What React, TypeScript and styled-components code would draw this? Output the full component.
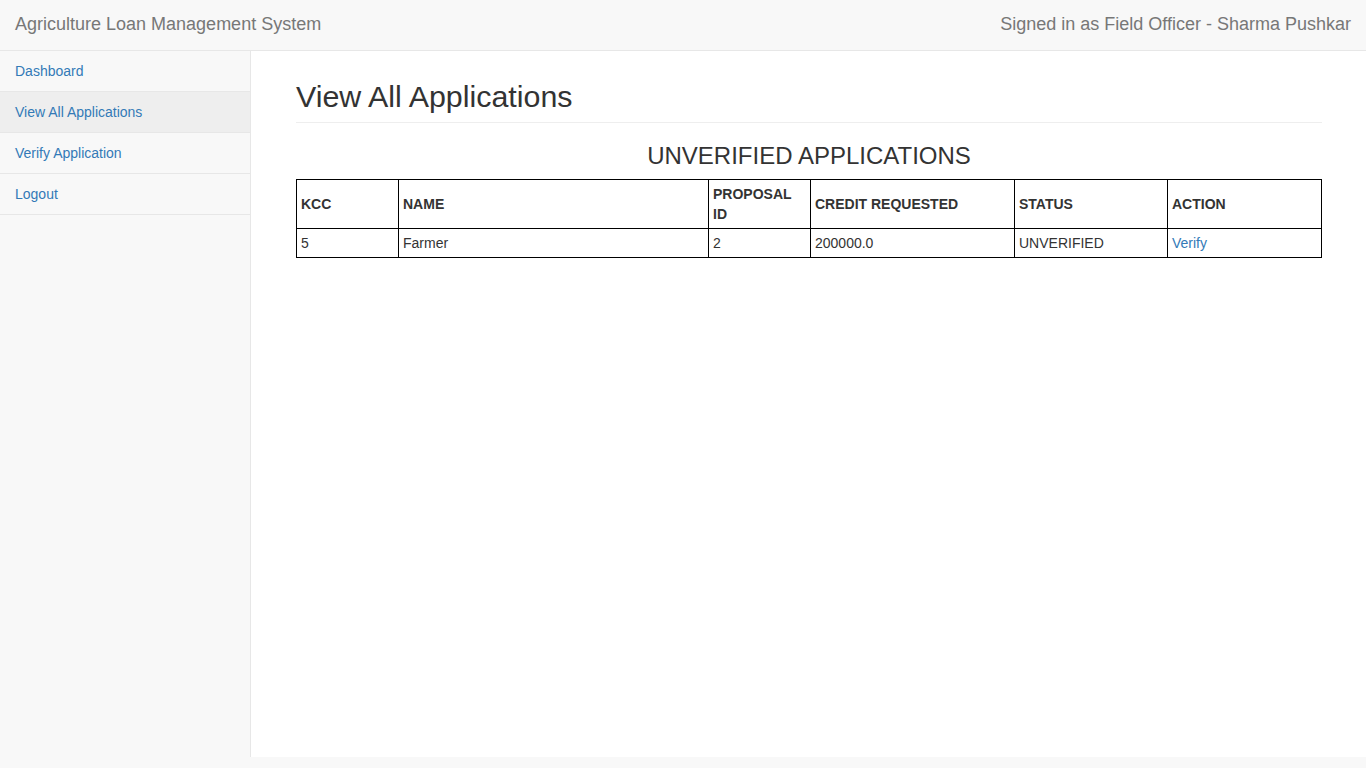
import React from "react";
import styled, { createGlobalStyle } from "styled-components";

const Global = createGlobalStyle`
  html, body { margin: 0; padding: 0; }
  body {
    background: #f8f8f8;
    font-family: "Liberation Sans", Arial, sans-serif;
    font-size: 14px;
    line-height: 1.42857;
    color: #333;
  }
  * { box-sizing: border-box; }
`;

const Navbar = styled.nav`
  height: 51px;
  background: #f8f8f8;
  border-bottom: 1px solid #e7e7e7;
  display: flex;
  justify-content: space-between;
  align-items: center;
  padding: 0 15px;
`;

const NavText = styled.span`
  font-size: 18px;
  line-height: 20px;
  color: #777;
  padding-bottom: 2px;
`;

const Body = styled.div`
  display: flex;
  align-items: flex-start;
`;

const Sidebar = styled.ul`
  width: 250px;
  flex: 0 0 250px;
  list-style: none;
  margin: 0;
  padding: 0;
`;

const SideItem = styled.li<{ $active?: boolean }>`
  border-bottom: 1px solid #e7e7e7;
  background: ${(p) => (p.$active ? "#eeeeee" : "transparent")};
`;

const SideLink = styled.a`
  display: block;
  padding: 10px 15px;
  line-height: 20px;
  font-size: 14px;
  color: #337ab7;
  text-decoration: none;
`;

const PageWrapper = styled.main`
  flex: 1;
  min-height: 706px;
  background: #fff;
  border-left: 1px solid #e7e7e7;
  padding: 0 46px 0 45px;
`;

const PageHeader = styled.h1`
  font-size: 30.4px;
  font-weight: 500;
  line-height: 33px;
  color: #333;
  margin: 29px 0 0;
  padding-bottom: 9px;
  border-bottom: 1px solid #eee;
`;

const SectionTitle = styled.h3`
  font-size: 24px;
  font-weight: 500;
  line-height: 1.1;
  text-align: center;
  color: #333;
  margin: 20px 0 10px;
`;

const Table = styled.table`
  width: 100%;
  border-collapse: collapse;
  table-layout: fixed;
  border: 1px solid #000;
`;

const Th = styled.th`
  border: 1px solid #000;
  padding: 4px;
  text-align: left;
  font-weight: bold;
  font-size: 14px;
  line-height: 20px;
  color: #333;
  vertical-align: middle;
`;

const Td = styled.td`
  border: 1px solid #000;
  padding: 4px;
  font-size: 14px;
  line-height: 20px;
  color: #333;
`;

const Link = styled.a`
  color: #337ab7;
  text-decoration: none;
`;

const cols = [102, 310, 102, 204, 153, 154];

export default function App() {
  return (
    <>
      <Global />
      <Navbar>
        <NavText>Agriculture Loan Management System</NavText>
        <NavText>Signed in as Field Officer - Sharma Pushkar</NavText>
      </Navbar>
      <Body>
        <Sidebar>
          <SideItem><SideLink href="#">Dashboard</SideLink></SideItem>
          <SideItem $active><SideLink href="#">View All Applications</SideLink></SideItem>
          <SideItem><SideLink href="#">Verify Application</SideLink></SideItem>
          <SideItem><SideLink href="#">Logout</SideLink></SideItem>
        </Sidebar>
        <PageWrapper>
          <PageHeader>View All Applications</PageHeader>
          <SectionTitle>UNVERIFIED APPLICATIONS</SectionTitle>
          <Table>
            <colgroup>
              {cols.map((w, i) => (
                <col key={i} style={{ width: w }} />
              ))}
            </colgroup>
            <thead>
              <tr>
                <Th>KCC</Th>
                <Th>NAME</Th>
                <Th>PROPOSAL ID</Th>
                <Th>CREDIT REQUESTED</Th>
                <Th>STATUS</Th>
                <Th>ACTION</Th>
              </tr>
            </thead>
            <tbody>
              <tr>
                <Td>5</Td>
                <Td>Farmer</Td>
                <Td>2</Td>
                <Td>200000.0</Td>
                <Td>UNVERIFIED</Td>
                <Td><Link href="#">Verify</Link></Td>
              </tr>
            </tbody>
          </Table>
        </PageWrapper>
      </Body>
    </>
  );
}
